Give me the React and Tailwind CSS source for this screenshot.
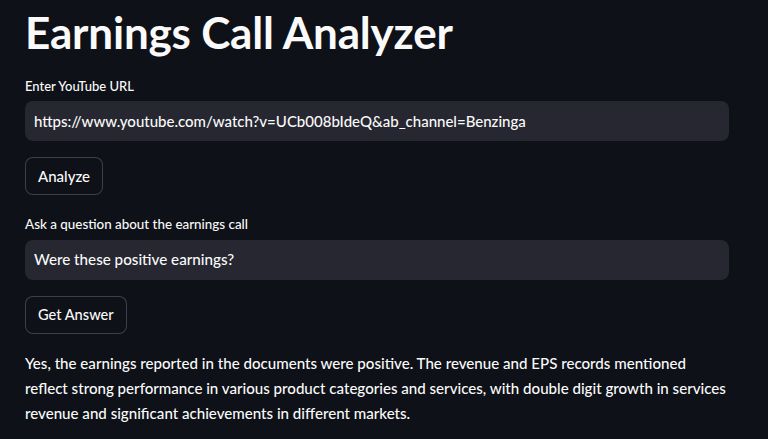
export default function App() {
  return (
    <div className="min-h-[439px] w-full bg-[#0e1117] text-[#fafafa] overflow-hidden" style={{ fontFamily: "Lato, 'Noto Sans', sans-serif" }}>
      <div className="w-[704px] ml-[25px] pt-[6px] flex flex-col">
        <h1 className="text-[44px] font-bold leading-[1.2] tracking-[-0.2px]">Earnings Call Analyzer</h1>
        <label className="mt-[18px] text-[13px] leading-[18px] font-medium">Enter YouTube URL</label>
        <div className="mt-[6px] h-[40px] rounded-[8px] bg-[#262730] flex items-center px-[9px] text-[15px] font-medium">
          https://www.youtube.com/watch?v=UCb008bIdeQ&amp;ab_channel=Benzinga
        </div>
        <div className="mt-[16px]">
          <button className="h-[38px] px-[12px] rounded-[8px] border border-[rgba(250,250,250,0.2)] bg-[#0e1117] text-[15px] font-medium">Analyze</button>
        </div>
        <label className="mt-[20px] text-[13.4px] leading-[18px] font-medium">Ask a question about the earnings call</label>
        <div className="mt-[7px] h-[40px] rounded-[8px] bg-[#262730] flex items-center px-[9px] text-[15.2px] font-medium">
          Were these positive earnings?
        </div>
        <div className="mt-[16px]">
          <button className="h-[38px] px-[12px] rounded-[8px] border border-[rgba(250,250,250,0.2)] bg-[#0e1117] text-[14.6px] font-medium">Get Answer</button>
        </div>
        <p className="mt-[17px] text-[15.1px] leading-[25px] font-medium">
          Yes, the earnings reported in the documents were positive. The revenue and EPS records mentioned reflect strong performance in various product categories and services, with double digit growth in services revenue and significant achievements in different markets.
        </p>
      </div>
    </div>
  );
}
